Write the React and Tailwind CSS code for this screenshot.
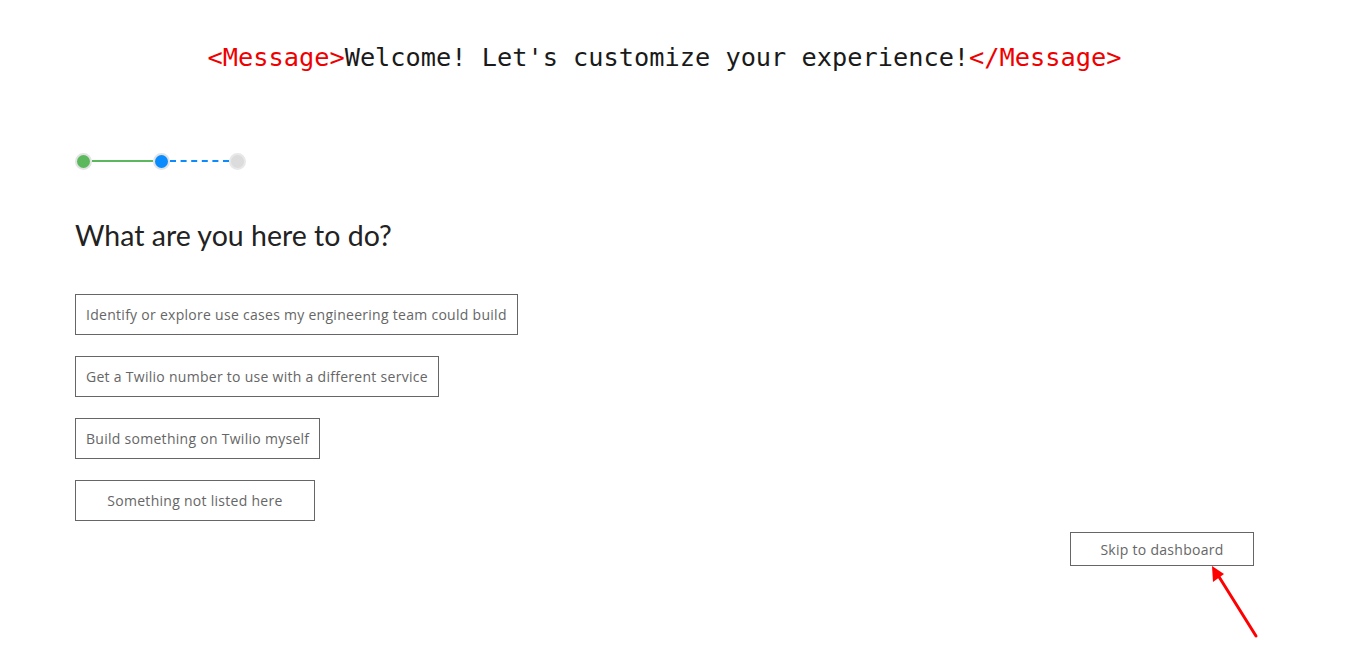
import React from 'react';

const options = [
  'Identify or explore use cases my engineering team could build',
  'Get a Twilio number to use with a different service',
  'Build something on Twilio myself',
  'Something not listed here',
];

const Steps = () => (
  <div className="flex items-center h-[20px]">
    <span className="w-[17px] h-[17px] rounded-full bg-[#5cb85c] border-2 border-[#e3e3e3] box-border" />
    <span className="w-[61px] h-[2px] bg-[#5cb85c]" />
    <span className="w-[17px] h-[17px] rounded-full bg-[#0a8cff] border-2 border-[#e3e3e3] box-border" />
    <span className="w-[59px] border-t-2 border-dashed border-[#0a8cff]" />
    <span className="w-[17px] h-[17px] rounded-full bg-[#dcdcdc] border-2 border-[#e8e8e8] box-border" />
  </div>
);

const App = () => {
  return (
    <div className="relative min-h-[669px] bg-white pl-[75px] pr-[111px] font-['Open_Sans',sans-serif]">
      <h1 className="pt-[40px] text-center font-['DejaVu_Sans_Mono',monospace] text-[25.3px] leading-[36px] text-[#1a1a1a]">
        <span className="text-[#ee0000]">&lt;Message&gt;</span>
        Welcome! Let's customize your experience!
        <span className="text-[#ee0000]">&lt;/Message&gt;</span>
      </h1>

      <div className="mt-[75px]">
        <Steps />
      </div>

      <h2 className="mt-[46px] font-['Lato',sans-serif] text-[28.5px] leading-[36px] text-[#222] font-normal">What are you here to do?</h2>

      <div className="mt-[41px] flex flex-col items-start gap-[21px]">
        {options.map((o) => (
          <button
            key={o}
            className="h-[41px] min-w-[240px] px-[10px] border border-[#666] text-[14px] tracking-[0.28px] text-[#666] bg-white"
          >
            {o}
          </button>
        ))}
      </div>

      <div className="flex justify-end mt-[11px]">
        <button className="h-[34px] w-[184px] border border-[#666] text-[14px] tracking-[0.28px] text-[#666] bg-white">
          Skip to dashboard
        </button>
      </div>

      <svg className="absolute left-[1200px] top-[560px]" width="70" height="85" viewBox="0 0 70 85">
        <line x1="56" y1="76" x2="16" y2="12" stroke="#ff0000" strokeWidth="3" strokeLinecap="round" />
        <polygon points="12,6 13,22 24,14" fill="#ff0000" />
      </svg>
    </div>
  );
};

export default App;
